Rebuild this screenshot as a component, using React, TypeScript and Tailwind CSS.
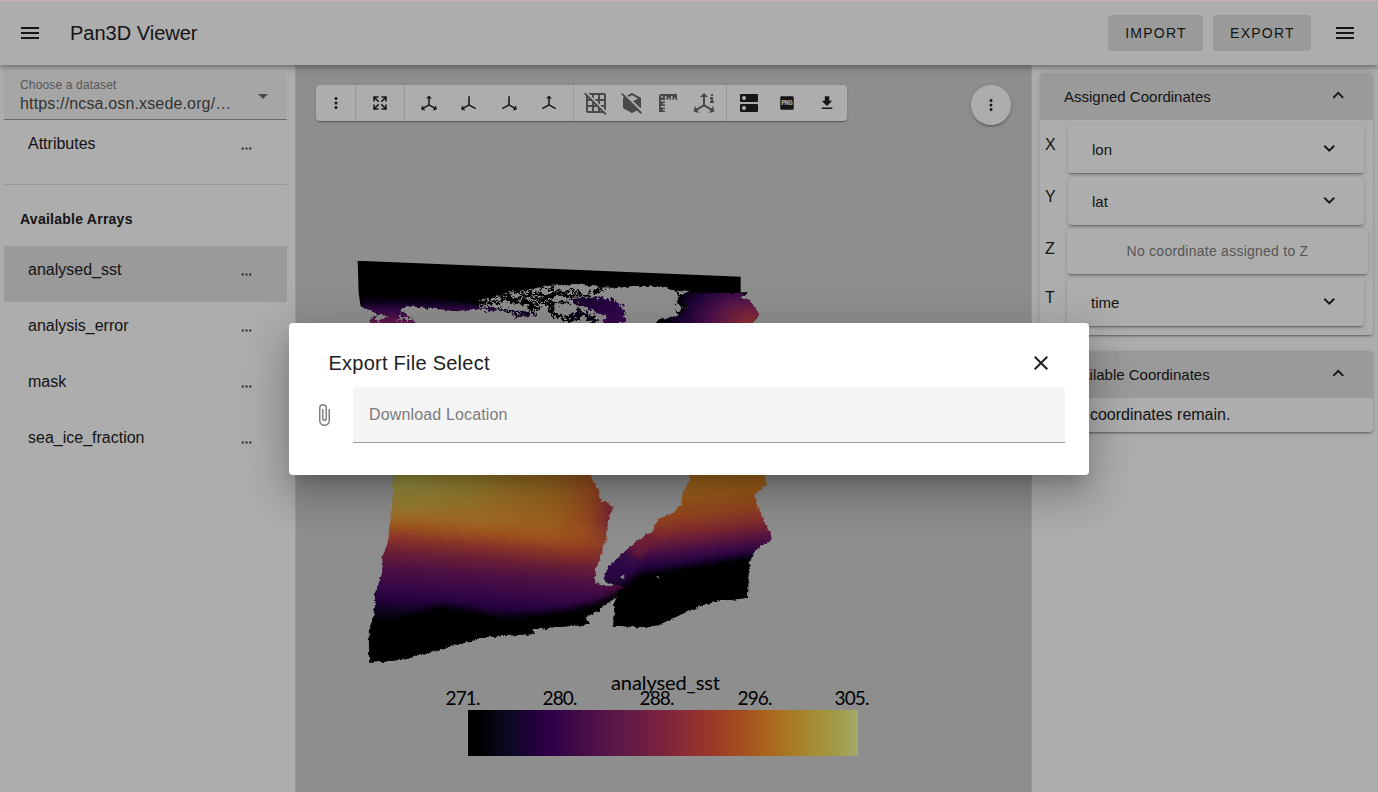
import React from "react";

const ICONS = {
  menu: "M3,6H21V8H3V6M3,11H21V13H3V11M3,16H21V18H3V16Z",
  dotsV:
    "M12,16A2,2 0 0,1 14,18A2,2 0 0,1 12,20A2,2 0 0,1 10,18A2,2 0 0,1 12,16M12,10A2,2 0 0,1 14,12A2,2 0 0,1 12,14A2,2 0 0,1 10,12A2,2 0 0,1 12,10M12,4A2,2 0 0,1 14,6A2,2 0 0,1 12,8A2,2 0 0,1 10,6A2,2 0 0,1 12,4Z",
  dotsH:
    "M16,12A2,2 0 0,1 18,10A2,2 0 0,1 20,12A2,2 0 0,1 18,14A2,2 0 0,1 16,12M10,12A2,2 0 0,1 12,10A2,2 0 0,1 14,12A2,2 0 0,1 12,14A2,2 0 0,1 10,12M4,12A2,2 0 0,1 6,10A2,2 0 0,1 8,12A2,2 0 0,1 6,14A2,2 0 0,1 4,12Z",
  expand:
    "M9.5,13.09L10.91,14.5L6.41,19H10V21H3V14H5V17.59L9.5,13.09M10.91,9.5L9.5,10.91L5,6.41V10H3V3H10V5H6.41L10.91,9.5M14.5,13.09L19,17.59V14H21V21H14V19H17.59L13.09,14.5L14.5,13.09M13.09,9.5L17.59,5H14V3H21V10H19V6.41L14.5,10.91L13.09,9.5Z",
  axis:
    "M12,2L16,6H13V13.85L19.53,17.61L21,15.03L22.5,20.5L17,21.96L18.53,19.35L12,15.58L5.47,19.35L7,21.96L1.5,20.5L3,15.03L4.47,17.61L11,13.85V6H8L12,2Z",
  axisX: "M13,3V13.85L21.5,18.75L20.5,20.48L12,15.58L5.47,19.35L7,21.96L1.5,20.5L3,15.03L4.47,17.61L11,13.85V3Z",
  axisY: "M11,3V13.85L2.5,18.75L3.5,20.48L12,15.58L18.53,19.35L17,21.96L22.5,20.5L21,15.03L19.53,17.61L13,13.85V3Z",
  axisZ: "M12,2L16,6H13V13.85L21.5,18.75L20.5,20.48L12,15.58L3.5,20.48L2.5,18.75L11,13.85V6H8L12,2Z",
  axisInfo:
    "M12,2L16,6H13V13.85L19.53,17.61L21,15.03L22.5,20.5L17,21.96L18.53,19.35L12,15.58L5.47,19.35L7,21.96L1.5,20.5L3,15.03L4.47,17.61L11,13.85V6H8L12,2M19,3H21V5H19V3M18,6H21V10H22V12H18V10H19V8H18V6Z",
  gridOff:
    "M0,2.77L1.28,1.5L22.5,22.72L21.23,24L19.23,22H4C2.92,22 2,21.1 2,20V4.77L0,2.77M10,4V7.68L8,5.68V4H6.32L4.32,2H20A2,2 0 0,1 22,4V19.7L20,17.7V16H18.32L16.32,14H20V10H16V13.68L14,11.68V10H12.32L10.32,8H14V4H10M16,4V8H20V4H16M16,20H17.23L16,18.77V20M4,8H5.23L4,6.77V8M10,14H11.23L10,12.77V14M14,20V16.77L13.23,16H10V20H14M8,20V16H4V20H8M8,14V10.77L7.23,10H4V14H8Z",
  cubeOff:
    "M1.1,3.2L2.4,1.9L22.1,21.6L20.8,22.9L16.9,19.4L12.57,21.82C12.2,22.05 11.8,22.05 11.43,21.82L3.53,17.38C3.21,17.21 3,16.88 3,16.5V7.5C3,7.1 3.2,6.8 3.53,6.62L4.2,6.25L1.1,3.2M21,16.5C21,16.9 20.9,17.1 20.6,17.3L12.9,9.9L12.9,10.3L17.96,7.5L12,4.15L8.8,5.95L7.3,4.5L11.43,2.18C11.8,1.95 12.2,1.95 12.57,2.18L20.47,6.62C20.79,6.79 21,7.12 21,7.5V16.5Z",
  ruler:
    "M3,5V21H9V19.5H7V18H9V16.5H5V15H9V13.5H7V12H9V10.5H5V9H9V5H10.5V9H12V7H13.5V9H15V5H16.5V9H18V7H19.5V9H21V3H5A2,2 0 0,0 3,5M6,7A1,1 0 0,1 5,6A1,1 0 0,1 6,5A1,1 0 0,1 7,6A1,1 0 0,1 6,7Z",
  dns:
    "M7,9A2,2 0 0,1 5,7A2,2 0 0,1 7,5A2,2 0 0,1 9,7A2,2 0 0,1 7,9M20,3H4A1,1 0 0,0 3,4V10A1,1 0 0,0 4,11H20A1,1 0 0,0 21,10V4A1,1 0 0,0 20,3M7,19A2,2 0 0,1 5,17A2,2 0 0,1 7,15A2,2 0 0,1 9,17A2,2 0 0,1 7,19M20,13H4A1,1 0 0,0 3,14V20A1,1 0 0,0 4,21H20A1,1 0 0,0 21,20V14A1,1 0 0,0 20,13Z",
  box: "M19 3H5C3.9 3 3 3.9 3 5V19C3 20.1 3.9 21 5 21H19C20.1 21 21 20.1 21 19V5C21 3.9 20.1 3 19 3Z",
  download: "M5,20H19V18H5M19,9H15V3H9V9H5L12,16L19,9Z",
  close:
    "M19,6.41L17.59,5L12,10.59L6.41,5L5,6.41L10.59,12L5,17.59L6.41,19L12,13.41L17.59,19L19,17.59L13.41,12L19,6.41Z",
  down: "M7.41,8.58L12,13.17L16.59,8.58L18,10L12,16L6,10L7.41,8.58Z",
  up: "M7.41,15.41L12,10.83L16.59,15.41L18,14L12,8L6,14L7.41,15.41Z",
  caret: "M7,10L12,15L17,10H7Z",
  clip:
    "M16.5,6V17.5A4,4 0 0,1 12.5,21.5A4,4 0 0,1 8.5,17.5V5A2.5,2.5 0 0,1 11,2.5A2.5,2.5 0 0,1 13.5,5V15.5A1,1 0 0,1 12.5,16.5A1,1 0 0,1 11.5,15.5V6H10V15.5A2.5,2.5 0 0,0 12.5,18A2.5,2.5 0 0,0 15,15.5V5A4,4 0 0,0 11,1A4,4 0 0,0 7,5V17.5A5.5,5.5 0 0,0 12.5,23A5.5,5.5 0 0,0 18,17.5V6H16.5Z",
};

function Icon({ name, size = 24, className = "" }: { name: keyof typeof ICONS; size?: number; className?: string }) {
  return (
    <svg width={size} height={size} viewBox="0 0 24 24" fill="currentColor" className={"shrink-0 " + className}>
      <path d={ICONS[name]} />
    </svg>
  );
}

const STOPS: [number, string][] = [
  [0, "#000000"],
  [0.03, "#000004"],
  [0.07, "#09091d"],
  [0.12, "#190c3b"],
  [0.18, "#3d0062"],
  [0.22, "#470068"],
  [0.3, "#6a166b"],
  [0.4, "#8f2668"],
  [0.5, "#b5345a"],
  [0.56, "#cf434d"],
  [0.63, "#e6553b"],
  [0.7, "#f0732f"],
  [0.76, "#fb932b"],
  [0.82, "#f9b033"],
  [0.9, "#f3d552"],
  [0.95, "#eee76e"],
  [1, "#f4faa2"],
];

const TICKS: [number, string][] = [
  [463, "271."],
  [560, "280."],
  [657, "288."],
  [755, "296."],
  [852, "305."],
];

function Scene() {
  return (
    <svg className="block h-full w-full" viewBox="296 65 735 727">
      <defs>
        <linearGradient id="bar">
          {STOPS.map(([o, c]) => (
            <stop key={o} offset={o} stopColor={c} />
          ))}
        </linearGradient>
        <linearGradient id="pacific" gradientUnits="userSpaceOnUse" x1="380" y1="10" x2="345" y2="470">
          <stop offset="0" stopColor="#e3b540" />
          <stop offset=".15" stopColor="#ecb33c" />
          <stop offset=".3" stopColor="#f0a038" />
          <stop offset=".38" stopColor="#e87c30" />
          <stop offset=".46" stopColor="#c94b3c" />
          <stop offset=".54" stopColor="#a0304e" />
          <stop offset=".64" stopColor="#761a62" />
          <stop offset=".76" stopColor="#540b69" />
          <stop offset=".86" stopColor="#33045a" />
          <stop offset=".94" stopColor="#14062a" />
          <stop offset="1" stopColor="#000004" />
        </linearGradient>
        <radialGradient id="warmpool" gradientUnits="userSpaceOnUse" cx="200" cy="40" r="330" gradientTransform="translate(0 25) scale(1 .38)">
          <stop offset="0" stopColor="#e2e06a" stopOpacity=".85" />
          <stop offset=".6" stopColor="#dfd05a" stopOpacity=".4" />
          <stop offset="1" stopColor="#e8b840" stopOpacity="0" />
        </radialGradient>
        <linearGradient id="coast" gradientUnits="userSpaceOnUse" x1="440" y1="60" x2="820" y2="120">
          <stop offset="0" stopColor="#e86020" stopOpacity="0" />
          <stop offset=".5" stopColor="#e07020" stopOpacity=".4" />
          <stop offset=".8" stopColor="#d85028" stopOpacity=".7" />
          <stop offset="1" stopColor="#a82c50" stopOpacity=".95" />
        </linearGradient>
        <linearGradient id="coastFade" gradientUnits="userSpaceOnUse" x1="0" y1="15" x2="0" y2="290">
          <stop offset="0" stopColor="#fff" />
          <stop offset=".5" stopColor="#fff" />
          <stop offset="1" stopColor="#000" />
        </linearGradient>
        <mask id="coastMask" maskUnits="userSpaceOnUse" x="400" y="0" width="450" height="360">
          <rect x="400" y="0" width="450" height="360" fill="url(#coastFade)" />
        </mask>
        <linearGradient id="atlantic" gradientUnits="userSpaceOnUse" x1="1050" y1="10" x2="1085" y2="310">
          <stop offset="0" stopColor="#ee9c2c" />
          <stop offset=".25" stopColor="#e88828" />
          <stop offset=".42" stopColor="#dc6430" />
          <stop offset=".56" stopColor="#bd4044" />
          <stop offset=".68" stopColor="#8c2459" />
          <stop offset=".78" stopColor="#5c1168" />
          <stop offset=".87" stopColor="#35055a" />
          <stop offset=".97" stopColor="#04020c" />
        </linearGradient>
        <linearGradient id="bering" gradientUnits="userSpaceOnUse" x1="0" y1="165" x2="0" y2="255">
          <stop offset="0" stopColor="#000004" />
          <stop offset=".25" stopColor="#14052c" />
          <stop offset=".5" stopColor="#4a0c69" />
          <stop offset="1" stopColor="#a02a72" />
        </linearGradient>
        <radialGradient id="gulf" gradientUnits="userSpaceOnUse" cx="1235" cy="250" r="270" gradientTransform="translate(0 100) scale(1 .6)">
          <stop offset="0" stopColor="#d34d4c" />
          <stop offset=".25" stopColor="#a8305f" />
          <stop offset=".5" stopColor="#6c1870" />
          <stop offset=".75" stopColor="#2e0755" />
          <stop offset="1" stopColor="#000004" />
        </radialGradient>
        <linearGradient id="hudson" x1="0" y1="0" x2="1" y2="1">
          <stop offset="0" stopColor="#1c0738" />
          <stop offset=".5" stopColor="#3a0864" />
          <stop offset="1" stopColor="#5a0f74" />
        </linearGradient>
        <filter id="rough" x="-5%" y="-5%" width="110%" height="110%" colorInterpolationFilters="sRGB">
          <feTurbulence type="fractalNoise" baseFrequency=".07" numOctaves="4" seed="4" />
          <feDisplacementMap in="SourceGraphic" scale="13" xChannelSelector="R" yChannelSelector="G" />
        </filter>
        <filter id="rougher" x="-10%" y="-20%" width="120%" height="140%" colorInterpolationFilters="sRGB">
          <feTurbulence type="fractalNoise" baseFrequency=".09" numOctaves="4" seed="9" />
          <feDisplacementMap in="SourceGraphic" scale="32" xChannelSelector="R" yChannelSelector="G" />
        </filter>
        <filter id="soft" x="-10%" y="-30%" width="120%" height="160%">
          <feGaussianBlur stdDeviation="9" />
        </filter>
        <clipPath id="north">
          <path d="M53,62 L1202,110 V157 L1300,157 V260 H40 V200 H62 L56,160Z" />
        </clipPath>
        <clipPath id="west">
          <path d="M160,10 L158,100 150,155 143,220 128,255 126,310 112,350 105,372 104,425 90,472 86,480 88,578 140,574 205,566 240,551 272,547 300,537 355,522 440,501 540,494 582,492 576,478 640,472 720,466 750,460 736,442 775,422 800,400 840,376 875,345 900,320 840,330 815,347 790,348 766,340 764,300 782,270 784,250 800,210 798,190 810,140 818,110 805,98 782,92 776,60 755,25 752,10Z" />
        </clipPath>
        <clipPath id="east">
          <path d="M1046,10 L1050,30 1030,62 1024,100 1000,130 955,148 935,185 890,212 862,238 835,262 808,290 788,322 800,336 820,342 850,350 835,374 820,405 826,430 820,466 910,473 955,465 1040,425 1090,405 1135,393 1224,383 1225,300 1235,260 1250,238 1295,210 1290,182 1265,140 1252,100 1245,75 1280,40 1275,10Z" />
        </clipPath>
      </defs>

      <g transform="translate(340 240) scale(.33333)" clipPath="url(#north)">
        <g filter="url(#rough)">
          <path
            d="M20,30 L1220,80 L1220,158 1214,164 1200,172 1232,185 1256,222 1245,240 1225,260 H940 L955,238 1010,232 1030,205 1010,180 1035,160 1050,152 1000,152 960,138 880,138 830,144 790,142 700,132 620,138 560,150 500,158 450,172 420,182 415,205 350,214 290,206 200,198 180,212 222,238 225,260 H85 L90,235 118,222 75,208 62,195 30,190Z"
            fill="#000"
          />
          <path d="M64,192 L62,165 H260 L420,200 415,205 350,214 290,206 200,198 180,212 222,238 225,260 H85 L90,235 118,222 75,208Z" fill="url(#bering)" />
          <path d="M1206,158 L1214,164 1200,172 1232,185 1256,222 1245,240 1225,260 H940 L955,238 1010,232 1030,205 1010,180 1035,158Z" fill="url(#gulf)" />
        </g>
        <g filter="url(#rougher)">
          <path d="M690,178 L760,170 820,178 850,205 858,255 H790 L800,232 740,204 700,190Z" fill="url(#hudson)" />
          <path d="M102,232 Q120,220 145,230 Q130,242 102,238 M172,234 Q195,224 220,236 Q195,246 172,240" fill="#d1d1d1" />
          <g fill="none" stroke="#000" strokeWidth="8">
            <path d="M415,190 L460,188 500,180 550,186 610,188 690,186" />
            <path d="M440,172 L480,168 520,176 570,170 600,178 650,168" />
            <path d="M520,152 L555,165 590,158 620,170 655,162 690,170 740,165 790,146" />
            <path d="M500,160 L530,190 560,185 580,208 600,200" strokeWidth="11" />
            <path d="M555,150 L575,160 M600,140 L655,150 M650,158 L700,152 L720,160" strokeWidth="6" />
            <path d="M640,192 L630,212 650,228 690,240" strokeWidth="11" />
            <path d="M685,252 L700,225 730,222 770,244 M720,205 L710,240" strokeWidth="14" stroke="#0b0520" />
            <path d="M1010,158 L1030,172 1015,190 1035,205 1010,218" />
          </g>
          <path d="M415,200 L470,208 520,214 590,222 M520,226 L570,222" fill="none" stroke="#1c0738" strokeWidth="7" />
          <path d="M440,206 L475,212" stroke="#3d0a60" strokeWidth="8" />
        </g>
      </g>

      <g transform="translate(340 470) scale(.33333)">
        <g filter="url(#rough)">
          <g clipPath="url(#west)">
            <rect x="60" y="0" width="860" height="600" fill="url(#pacific)" />
            <rect x="60" y="0" width="860" height="300" fill="url(#warmpool)" />
            <rect x="400" y="0" width="450" height="360" fill="url(#coast)" mask="url(#coastMask)" />
            <path d="M40,490 L110,470 200,438 300,404 400,420 470,438 580,432 680,418 760,400 860,352 940,330 940,640 H40Z" fill="#000" filter="url(#soft)" />
            <path d="M40,505 L110,486 200,458 300,430 470,460 600,450 760,418 880,360 V640 H40Z" fill="#000" />
          </g>
          <g clipPath="url(#east)">
            <rect x="780" y="0" width="540" height="500" fill="url(#atlantic)" />
            <path d="M840,250 Q880,200 950,180 L930,230 880,290Z" fill="#a02a52" opacity=".55" filter="url(#soft)" />
            <path d="M770,340 L800,270 860,230 900,290 860,350Z" fill="#43096c" opacity=".8" filter="url(#soft)" />
            <path d="M780,385 L850,352 910,318 1000,300 1120,278 1260,252 1300,300 V520 H780Z" fill="#000" filter="url(#soft)" />
            <path d="M800,390 L900,342 1000,315 1240,285 V520 H780Z" fill="#000" />
          </g>
          <path d="M838,322 L854,313 850,324Z M948,320 L958,320 954,327Z" fill="#d1d1d1" />
        </g>
      </g>

      <rect x="468" y="710" width="390" height="46" fill="url(#bar)" />
      <g fill="#000" fontFamily="Lato, 'Liberation Sans', sans-serif">
        <text x="611" y="690" fontSize="20" textLength="109" lengthAdjust="spacing">
          analysed_sst
        </text>
        {TICKS.map(([x, t]) => (
          <text key={t} x={x - 17.5} y="705" fontSize="19" textLength="35" lengthAdjust="spacing">
            {t}
          </text>
        ))}
      </g>
    </svg>
  );
}

function ArrayRow({ label, active = false }: { label: string; active?: boolean }) {
  return (
    <div className={"flex h-14 justify-between pl-6 pr-[33px] pt-3 " + (active ? "bg-[#e3e3e3]" : "")}>
      <span className="leading-6">{label}</span>
      <Icon name="dotsH" size={15} className="mt-[9px] text-[#5c5c5c]" />
    </div>
  );
}

const CARD =
  "rounded bg-white shadow-[0_3px_1px_-2px_rgba(0,0,0,0.2),0_2px_2px_0_rgba(0,0,0,0.14),0_1px_5px_0_rgba(0,0,0,0.12)]";

function Coord({ axis, name, wide }: { axis: string; name: string; wide?: boolean }) {
  return (
    <div className="flex h-[48px]">
      <span className={"shrink-0 pl-[5px] pt-2 leading-6 " + (wide ? "w-[27px]" : "w-[28px]")}>{axis}</span>
      <div className={"mr-[9px] flex flex-1 items-center justify-between pl-6 pr-6 text-[15px] " + CARD}>
        <span className="pt-0.5">{name}</span>
        <Icon name="down" size={22.5} className="-mt-px" />
      </div>
    </div>
  );
}

function PanelTitle({ children }: { children: React.ReactNode }) {
  return (
    <div className="flex h-[47px] items-center justify-between rounded-t bg-[#e3e3e3] pl-6 pr-6 text-[15px]">
      <span className="pt-px">{children}</span>
      <Icon name="up" size={22.5} className="-mt-0.5" />
    </div>
  );
}

function Tool({ name, size = 18, w = "w-10", muted = false }: { name: keyof typeof ICONS; size?: number; w?: string; muted?: boolean }) {
  return (
    <div className={"flex h-9 items-center justify-center " + w + (muted ? " text-[#6c6c6c]" : "")}>
      <Icon name={name} size={size} />
    </div>
  );
}

const GROUP = "flex border-l border-[#e0e0e0]";

export default function App() {
  return (
    <div className="relative flex h-[792px] w-[1378px] flex-col overflow-hidden bg-white font-['Liberation_Sans',Arial,sans-serif] text-base text-[#212121]">
      <header className="z-10 flex h-[65px] shrink-0 items-center bg-white pl-[18px] pr-[21px] pt-px shadow-[0_2px_4px_-1px_rgba(0,0,0,0.2),0_4px_5px_0_rgba(0,0,0,0.14),0_1px_10px_0_rgba(0,0,0,0.12)]">
        <Icon name="menu" />
        <h1 className="ml-7 flex-1 text-xl">Pan3D Viewer</h1>
        <button className="h-9 w-[95px] rounded bg-[#e3e3e3] pl-px text-sm tracking-[1.25px]">IMPORT</button>
        <button className="ml-[10px] mr-[22px] h-9 w-[98px] rounded bg-[#e3e3e3] pl-px text-sm tracking-[1.25px]">EXPORT</button>
        <Icon name="menu" />
      </header>

      <div className="flex min-h-0 flex-1">
        <aside className="w-[296px] shrink-0 border-r border-[#e0e0e0] pl-1 pr-2 pt-2">
          <div className="flex h-[47px] items-center justify-between rounded-t border-b border-[#9b9b9b] bg-[#f5f5f5] pl-4 pr-3">
            <div>
              <div className="text-xs leading-4 tracking-[0.15px] text-[#808080]">Choose a dataset</div>
              <div className="leading-[22px] tracking-[0.15px] text-[#4d4d4d]">https://ncsa.osn.xsede.org/…</div>
            </div>
            <Icon name="caret" className="text-[#6c6c6c]" />
          </div>
          <ArrayRow label="Attributes" />
          <div className="mt-2 border-t border-[#e0e0e0]" />
          <div className="pb-4 pl-4 pt-[23px] text-sm font-bold leading-[22px] tracking-[0.25px]">Available Arrays</div>
          <ArrayRow label="analysed_sst" active />
          <ArrayRow label="analysis_error" />
          <ArrayRow label="mask" />
          <ArrayRow label="sea_ice_fraction" />
        </aside>

        <main className="relative flex-1 bg-[#d1d1d1]">
          <Scene />
          <div className="absolute left-5 top-5 flex h-9 w-[531px] rounded bg-white shadow-[0_2px_1px_-1px_rgba(0,0,0,0.2),0_1px_1px_0_rgba(0,0,0,0.14),0_1px_3px_0_rgba(0,0,0,0.12)]">
            <Tool name="dotsV" w="w-[39px]" />
            <div className={GROUP}>
              <Tool name="expand" w="w-[48px]" />
            </div>
            <div className={GROUP + " w-[169px] pl-1"}>
              <Tool name="axis" />
              <Tool name="axisX" />
              <Tool name="axisY" />
              <Tool name="axisZ" />
            </div>
            <div className={GROUP + " w-[153px] pl-1"}>
              <Tool name="gridOff" size={24} w="w-9" muted />
              <Tool name="cubeOff" size={24} w="w-9" muted />
              <Tool name="ruler" size={24} w="w-9" muted />
              <Tool name="axisInfo" size={24} w="w-9" muted />
            </div>
            <div className={GROUP + " pl-1"}>
              <Tool name="dns" size={24} w="w-9" />
              <div className="flex h-9 w-10 items-center justify-center">
                <svg width="18" height="18" viewBox="0 0 24 24">
                  <path d={ICONS.box} fill="currentColor" />
                  <text x="12" y="15" textAnchor="middle" fontSize="8.4" fontWeight="700" fill="#fff" stroke="#fff" strokeWidth=".3" fontFamily="Liberation Sans, sans-serif" textLength="15" lengthAdjust="spacingAndGlyphs">
                    PNG
                  </text>
                </svg>
              </div>
              <Tool name="download" />
            </div>
          </div>
          <div className="absolute right-5 top-5 flex h-10 w-10 items-center justify-center rounded-full bg-white shadow-[0_3px_1px_-2px_rgba(0,0,0,0.2),0_2px_2px_0_rgba(0,0,0,0.14),0_1px_5px_0_rgba(0,0,0,0.12)]">
            <Icon name="dotsV" size={18} />
          </div>
        </main>

        <aside className="w-[347px] shrink-0 border-l border-[#e0e0e0] pl-2 pr-[5px] pt-2">
          <section className={"h-[262px] " + CARD}>
            <PanelTitle>Assigned Coordinates</PanelTitle>
            <div className="flex flex-col gap-1 pt-[5px]">
              <Coord axis="X" name="lon" />
              <Coord axis="Y" name="lat" />
              <div className="flex h-[45px]">
                <span className="w-[27px] shrink-0 pl-[5px] pt-2 leading-6">Z</span>
                <div className={"mr-[5px] flex flex-1 items-center justify-center pb-0.5 text-sm tracking-[0.25px] text-[#808080] " + CARD}>
                  No coordinate assigned to Z
                </div>
              </div>
              <Coord axis="T" name="time" wide />
            </div>
          </section>
          <section className={"mt-4 h-[81px] " + CARD}>
            <PanelTitle>Available Coordinates</PanelTitle>
            <div className="pl-[25px] pt-[5px] leading-6">No coordinates remain.</div>
          </section>
        </aside>
      </div>

      <div className="absolute inset-0 z-20 flex items-start justify-center bg-black/32 pt-[323px]">
        <div className="h-[152px] w-[800px] rounded bg-white px-6 pt-5 shadow-[0_11px_15px_-7px_rgba(0,0,0,0.2),0_24px_38px_3px_rgba(0,0,0,0.14),0_9px_46px_8px_rgba(0,0,0,0.12)]">
          <div className="flex h-[44px] items-start justify-between pl-[15.5px] pr-[12.5px]">
            <h2 className="text-xl leading-10 tracking-[0.25px]">Export File Select</h2>
            <Icon name="close" className="mt-2" />
          </div>
          <div className="-ml-px flex items-center gap-[17px]">
            <Icon name="clip" className="text-[#808080]" />
            <div className="flex h-14 flex-1 items-center rounded-t border-b border-[#9e9e9e] bg-[#f5f5f5] pl-4 tracking-[0.15px] text-[#7b7b7b]">
              Download Location
            </div>
          </div>
        </div>
      </div>
      <div className="absolute inset-x-0 top-0 z-30 h-px bg-[#cdadb8]" />
    </div>
  );
}
